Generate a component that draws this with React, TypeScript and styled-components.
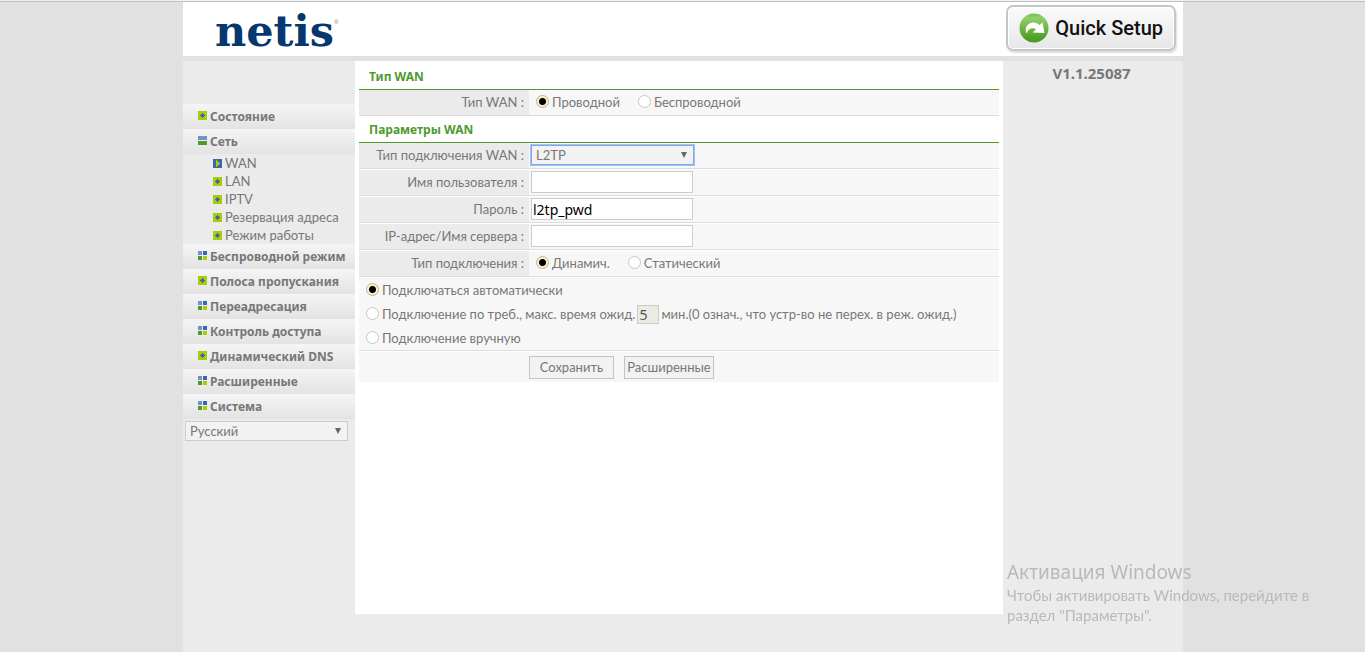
import React, { useState } from "react";
import styled, { createGlobalStyle, css } from "styled-components";

const text = `Lato, "Noto Sans", sans-serif`;
const display = `"Noto Sans", "Open Sans", sans-serif`;

const GlobalStyle = createGlobalStyle`
  *, *::before, *::after { box-sizing: border-box; }
  body {
    margin: 0;
    background: #e1e1e1;
    color: #777;
    font: 13px/18px ${text};
  }
  button, input, select { font: inherit; color: inherit; margin: 0; }
`;

const TopLine = styled.div`
  height: 2px;
  background: #f2f2f2;
  border-bottom: 1px solid #c0c0c0;
`;

/* Centred column whose left edge is kept on a whole pixel. */
const Page = styled.div`
  display: flex;
  flex-direction: column;
  max-width: 1000px;
  min-height: calc(100vh - 2px);
  margin-left: max(0px, round(up, calc(50vw - 500px), 1px));
`;

const Header = styled.header`
  display: flex;
  justify-content: space-between;
  align-items: flex-start;
  height: 54px;
  padding: 3px 7px 0 32px;
  background: #fff;
`;

const Logo = styled.a`
  display: flex;
  color: #06376f;
  font: bold 43px/52px "DejaVu Serif", serif;
  text-decoration: none;
`;

const Registered = styled.span`
  font: 6px/34px "Liberation Sans", sans-serif;
  color: #6a86ab;
`;

const QuickButton = styled.button`
  display: flex;
  align-items: center;
  gap: 6px;
  height: 46px;
  padding: 0 11px;
  border: 2px solid #c6c6c6;
  border-radius: 7px;
  background: linear-gradient(#fbfbfb, #e6e6e6);
  box-shadow: inset 0 0 0 1px #fff, 1px 2px 2px #ddd;
  color: #111;
  font: 500 20px/24px Roboto, "Liberation Sans", sans-serif;
  white-space: nowrap;
`;

const Body = styled.div`
  display: grid;
  grid-template-columns: 172px 1fr 180px;
  flex: 1;
  align-items: start;
  margin-top: 5px;
  background: #ebebeb;
`;

const Sidebar = styled.nav`
  padding-top: 43px;
`;

const Menu = styled.ul`
  margin: 0;
  padding: 0;
  list-style: none;
`;

const MenuLink = styled.a`
  display: flex;
  align-items: center;
  gap: 3px;
  height: 25px;
  padding-left: 15px;
  background: linear-gradient(#f5f5f5, #e3e3e3);
  color: #777;
  font: bold 12px/18px ${display};
  text-decoration: none;
  white-space: nowrap;
  svg { flex-shrink: 0; margin-bottom: 2px; }
`;

const SubLink = styled.a`
  display: flex;
  align-items: center;
  gap: 3px;
  height: 18px;
  padding-left: 30px;
  color: #777;
  text-decoration: none;
  white-space: nowrap;
`;

const SelectBox = styled.span`
  display: inline-grid;
  grid-template-columns: 163px;
  align-items: center;
  > * { grid-area: 1 / 1; }
  svg { justify-self: end; margin-right: 6px; pointer-events: none; }
`;

const Select = styled.select<{ $active?: boolean }>`
  appearance: none;
  width: 163px;
  height: 20px;
  padding: 0 20px 0 4px;
  border: 1px solid #ccc;
  border-radius: 0;
  background: #f2f2f2;
  line-height: 18px;
  outline: none;
  ${(p) => p.$active && css`
    border-color: #7ea6ee;
    box-shadow: 0 0 0 1px #a3c1f5;
  `}
`;

const Language = styled.div`
  display: flex;
  padding: 2px;
`;

const Content = styled.main`
  min-height: 553px;
  padding: 2px 4px;
  background: #fff;
`;

const SectionTitle = styled.h2`
  height: 27px;
  margin: 0;
  padding: 1px 0 0 10px;
  border-bottom: 1px solid #4f9a2f;
  color: #4f9a2f;
  font: bold 12px/26px ${display};
`;

const Row = styled.div`
  display: grid;
  grid-template-columns: 170px 1fr;
  height: 26px;
  border-bottom: 1px solid #ddd;
  background: #f7f7f7;
  & + & { margin-top: 1px; }
`;

const labelCell = css`
  padding-right: 5px;
  background: #ebebeb;
  line-height: 25px;
  text-align: right;
  white-space: nowrap;
`;

const FieldLabel = styled.label`${labelCell}`;
const GroupLabel = styled.span`${labelCell}`;

const Field = styled.div<{ $radios?: boolean }>`
  display: flex;
  align-items: center;
  gap: 18px;
  height: 24px;
  padding-left: ${(p) => (p.$radios ? 7 : 2)}px;
`;

const TextInput = styled.input`
  width: 162px;
  height: 22px;
  padding: 0 1px;
  border: 1px solid #ccc;
  background: #fff;
  color: #000;
  font: 14px ${display};
`;

const RadioLabel = styled.label`
  display: inline-flex;
  align-items: center;
  gap: 3px;
  white-space: nowrap;
`;

const Radio = styled.input`
  appearance: none;
  width: 13px;
  height: 13px;
  margin-bottom: 2px;
  border: 1px solid #c6c6c6;
  border-radius: 50%;
  background: #fff;
  &:checked {
    border-color: #c3b491;
    background: radial-gradient(circle, #000 3px, #fdeecb 4px);
  }
`;

const Modes = styled.div`
  margin-top: 1px;
  padding-left: 7px;
  border-bottom: 1px solid #ddd;
  background: #f7f7f7;
`;

const Mode = styled.div`
  display: flex;
  align-items: center;
  height: 24px;
  white-space: nowrap;
`;

const Minutes = styled.input`
  width: 22px;
  height: 19px;
  margin: 0 2px;
  padding: 0 1px;
  border: 1px solid #ccc;
  background: #ebebe4;
  color: #555;
  font: 14px ${display};
`;

const Actions = styled.div`
  display: flex;
  gap: 10px;
  margin-top: 1px;
  padding: 4px 0 3px 170px;
  background: #f7f7f7;
`;

const ActionButton = styled.button<{ $width: number }>`
  width: ${(p) => p.$width}px;
  height: 23px;
  padding: 0 0 1px;
  border: 1px solid #c3c3c3;
  background: #f2f2f2;
  white-space: nowrap;
`;

const Version = styled.aside`
  padding: 2px 3px 0 0;
  font: bold 15px/20px ${display};
  text-align: center;
`;

const Watermark = styled.div`
  position: fixed;
  right: 38px;
  bottom: 27px;
  width: 320px;
  color: #b9b9b9;
  font: 15px/20px ${text};
  pointer-events: none;
  strong { display: block; font: 19px/26px ${display}; }
`;

type IconKind = "leaf" | "open" | "group" | "current";

const MenuIcon = ({ kind }: { kind: IconKind }) => (
  <svg width="9" height="9" viewBox="0 0 9 9" shapeRendering="crispEdges" aria-hidden="true">
    {kind === "leaf" && (
      <>
        <path fill="#a9cb0b" d="M0 0h9v9H0z" />
        <path fill="#3c66b1" d="M4 2h1v1h1v1h1v1H6v1H5v1H4V6H3V5H2V4h1V3h1z" />
      </>
    )}
    {kind === "current" && (
      <>
        <path fill="#3c66b1" d="M0 0h9v9H0z" />
        <path fill="#a9cb0b" d="M3 1h1v1h1v1h1v1h1v1H6v1H5v1H4v1H3z" />
      </>
    )}
    {kind === "open" && (
      <>
        <path fill="#7491ca" d="M0 0h9v4H0z" />
        <path fill="#4f9a2f" d="M0 5h9v4H0z" />
      </>
    )}
    {kind === "group" && (
      <>
        <path fill="#7491ca" d="M0 0h4v4H0z" />
        <path fill="#3c66b1" d="M5 0h4v4H5z" />
        <path fill="#4f9a2f" d="M0 5h4v4H0z" />
        <path fill="#a9cb0b" d="M5 5h4v4H5z" />
      </>
    )}
  </svg>
);

const Arrow = () => (
  <svg width="8" height="8" viewBox="0 0 8 8" aria-hidden="true">
    <path fill="#666" d="M1 1h6L4 7z" />
  </svg>
);

const SetupIcon = () => (
  <svg width="30" height="30" viewBox="0 0 30 30" aria-hidden="true">
    <defs>
      <linearGradient id="ball" x1="0" y1="0" x2="0" y2="1">
        <stop offset="0" stopColor="#6fbf4c" />
        <stop offset="0.15" stopColor="#93cf70" />
        <stop offset="0.6" stopColor="#66b03a" />
        <stop offset="1" stopColor="#45961f" />
      </linearGradient>
    </defs>
    <circle cx="15" cy="15" r="14.5" fill="url(#ball)" />
    <path
      fill="#fff"
      d="M7.500 20.500C5 14.500 9 9.500 14 9.500c3 0 5 1 6.500 2.500L23.500 9.500 25.500 20 13.500 19.500l3.500-3c-3-2.500-7.500-1.500-9.500 4z"
    />
  </svg>
);

const menu: { text: string; kind: IconKind; items?: string[] }[] = [
  { text: "Состояние", kind: "leaf" },
  { text: "Сеть", kind: "open", items: ["WAN", "LAN", "IPTV", "Резервация адреса", "Режим работы"] },
  { text: "Беспроводной режим", kind: "group" },
  { text: "Полоса пропускания", kind: "leaf" },
  { text: "Переадресация", kind: "group" },
  { text: "Контроль доступа", kind: "group" },
  { text: "Динамический DNS", kind: "leaf" },
  { text: "Расширенные", kind: "group" },
  { text: "Система", kind: "group" },
];

const RadioOption = ({ name, text, checked }: { name: string; text: string; checked?: boolean }) => (
  <RadioLabel>
    <Radio type="radio" name={name} defaultChecked={checked} />
    {text}
  </RadioLabel>
);

export default function App() {
  const [password, setPassword] = useState("l2tp_pwd");
  return (
    <>
      <GlobalStyle />
      <TopLine />
      <Page>
        <Header>
          <Logo href="#">
            netis<Registered>®</Registered>
          </Logo>
          <QuickButton type="button">
            <SetupIcon />
            Quick Setup
          </QuickButton>
        </Header>
        <Body>
          <Sidebar>
            <Menu>
              {menu.map((entry) => (
                <li key={entry.text}>
                  <MenuLink href="#">
                    <MenuIcon kind={entry.kind} />
                    {entry.text}
                  </MenuLink>
                  {entry.items && (
                    <Menu>
                      {entry.items.map((item) => (
                        <li key={item}>
                          <SubLink href="#">
                            <MenuIcon kind={item === "WAN" ? "current" : "leaf"} />
                            {item}
                          </SubLink>
                        </li>
                      ))}
                    </Menu>
                  )}
                </li>
              ))}
            </Menu>
            <Language>
              <SelectBox>
                <Select aria-label="Язык">
                  <option>Русский</option>
                </Select>
                <Arrow />
              </SelectBox>
            </Language>
          </Sidebar>
          <Content>
            <SectionTitle>Тип WAN</SectionTitle>
            <Row role="radiogroup" aria-labelledby="wan-type">
              <GroupLabel id="wan-type">Тип WAN :</GroupLabel>
              <Field $radios>
                <RadioOption name="wan" text="Проводной" checked />
                <RadioOption name="wan" text="Беспроводной" />
              </Field>
            </Row>
            <SectionTitle>Параметры WAN</SectionTitle>
            <Row>
              <FieldLabel htmlFor="connection">Тип подключения WAN :</FieldLabel>
              <Field>
                <SelectBox>
                  <Select id="connection" $active>
                    <option>L2TP</option>
                  </Select>
                  <Arrow />
                </SelectBox>
              </Field>
            </Row>
            <Row>
              <FieldLabel htmlFor="user">Имя пользователя :</FieldLabel>
              <Field>
                <TextInput id="user" type="text" />
              </Field>
            </Row>
            <Row>
              <FieldLabel htmlFor="password">Пароль :</FieldLabel>
              <Field>
                <TextInput
                  id="password"
                  type="text"
                  value={password}
                  onChange={(e) => setPassword(e.target.value)}
                />
              </Field>
            </Row>
            <Row>
              <FieldLabel htmlFor="server">IP-адрес/Имя сервера :</FieldLabel>
              <Field>
                <TextInput id="server" type="text" />
              </Field>
            </Row>
            <Row role="radiogroup" aria-labelledby="address-type">
              <GroupLabel id="address-type">Тип подключения :</GroupLabel>
              <Field $radios>
                <RadioOption name="address" text="Динамич." checked />
                <RadioOption name="address" text="Статический" />
              </Field>
            </Row>
            <Modes>
              <Mode>
                <RadioOption name="mode" text="Подключаться автоматически" checked />
              </Mode>
              <Mode>
                <RadioOption name="mode" text="Подключение по треб., макс. время ожид." />
                <Minutes type="text" defaultValue="5" disabled aria-label="Время ожидания, мин." />
                мин.(0 означ., что устр-во не перех. в реж. ожид.)
              </Mode>
              <Mode>
                <RadioOption name="mode" text="Подключение вручную" />
              </Mode>
            </Modes>
            <Actions>
              <ActionButton type="button" $width={85}>Сохранить</ActionButton>
              <ActionButton type="button" $width={90}>Расширенные</ActionButton>
            </Actions>
          </Content>
          <Version>V1.1.25087</Version>
        </Body>
      </Page>
      <Watermark>
        <strong>Активация Windows</strong>
        Чтобы активировать Windows, перейдите в раздел "Параметры".
      </Watermark>
    </>
  );
}
